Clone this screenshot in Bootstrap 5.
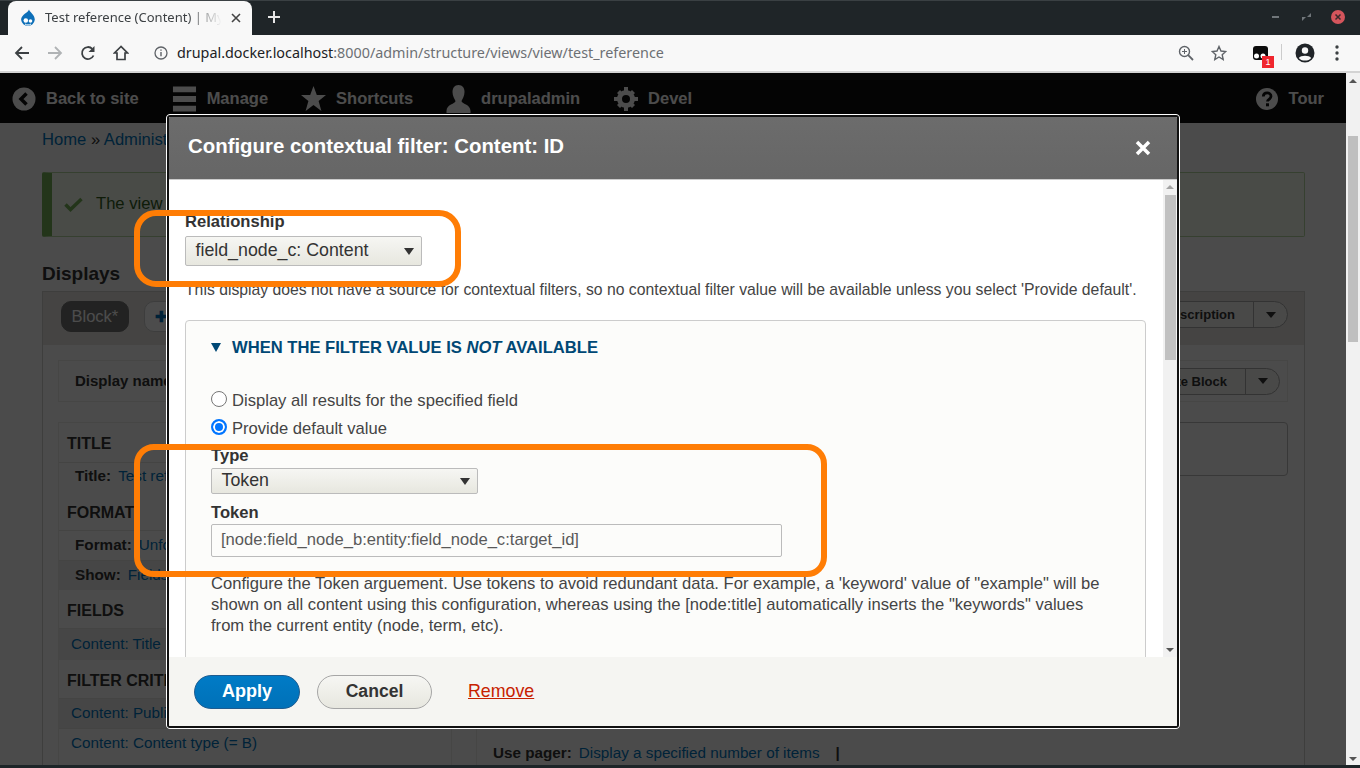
<!doctype html>
<html lang="en">
<head>
<meta charset="utf-8">
<title>Test reference (Content)</title>
<link href="https://cdn.jsdelivr.net/npm/bootstrap@5.3.0/dist/css/bootstrap.min.css" rel="stylesheet">
<style>
html,body{margin:0;height:768px;overflow:hidden;background:#1d2528}
body{font-family:"Liberation Sans",Arial,sans-serif;font-size:16.6px;color:#333}
.tabstrip{height:35px;background:#1f2528;border-top:1px solid #3a4043;padding-left:8px;font-family:"Noto Sans","Open Sans",sans-serif}
.tabitem{width:244px;height:34px;background:#f8f8f8;border-radius:8px 8px 0 0;padding:0 10px 0 12px;font-size:13px;color:#3c4043;white-space:nowrap}
.tabname{width:182px;overflow:hidden;margin-left:9px;-webkit-mask-image:linear-gradient(90deg,#000 78%,transparent 97%)}
.plusmark{margin-left:15px}
.stripy{margin-bottom:11px}
.winctl{margin-left:auto;padding-right:15px;gap:17px}
.addrbar{height:38px;background:#f8f8f8;border-bottom:2px solid #d3d3d3;padding:0 0 2px 14px;position:relative}
.addrbar svg{display:block}
.addr-right>svg,.infoi{margin-top:2px}
.navic{width:33px;height:16px;margin-top:2px}
.infoi{margin-left:9px}
.urltxt{font:14.35px "Noto Sans","Open Sans",sans-serif;color:#6d7074;margin-left:9px;white-space:nowrap}
.urltxt b{font-weight:400;color:#202124}
.addr-right{margin-left:auto;padding-right:21px}
.badge1{position:absolute;left:1262px;top:21px;width:12px;height:12px;background:#f0262e;color:#fff;font:9px/12px "Liberation Sans",sans-serif;text-align:center}
.vw{height:692px;position:relative;overflow:hidden;background:#fcfcfa}
.pagearea{width:1346px;height:692px;position:relative;overflow:hidden}
.dimmer{position:absolute;inset:0;background:rgba(0,0,0,.7)}
.dtool{height:50px;background:#0f0f0f;color:#fff;font-weight:700;font-size:16.5px;padding:1px 22px 0 12px}
.toolitem{gap:10px}
.toolgap{gap:33px}
.crumb{padding:6px 42px 0;height:33px;line-height:22px;white-space:nowrap}
.bglink{color:#0074bd}
.msgbox{margin:16px 41px 0 42px;height:65px;border:1px solid #b5d6a2;border-left:10px solid #77b259;border-radius:2px;background:#f3faef;color:#325e1c;padding-left:12px;gap:13px;white-space:nowrap}
.dsp-title{margin:25px 0 0 42px;font-size:19px;font-weight:700;line-height:24px;height:29px}
.dsp-box{margin:0 41px 0 42px;height:480px;border:1px solid #cfcfcb;border-bottom:0;position:relative}
.dsp-band{height:53px;background:#e6e5e1;padding:9px 16px 0 18px;align-items:flex-start}
.pillx{height:31px;border-radius:10px;padding:0 10px;line-height:29px;border:1px solid #ccc;background:#fff;color:#0074bd;font-weight:700;font-size:15px;white-space:nowrap}
.pillx.on{border-color:#727272;background:#727272;color:#fff;font-weight:400;margin-right:15px;font-size:16.5px;padding:0 9.500px}
.splitb{height:27px;border:1px solid #aaa;border-radius:14px;background:#f3f3f0;font-size:13px;font-weight:700;color:#333;white-space:nowrap}
.splitb .lhs{padding:0 18px;line-height:25px}
.splitb .rhs{width:34px;border-left:1px solid #aaa;height:100%}
.caretdn{width:0;height:0;border:5px solid transparent;border-top:6px solid #333;border-bottom:0}
.sel .caretdn{border-width:7px 5.500px 0}
.sel span{padding-bottom:2px}
.namebar{margin:15px 16px 0 15px;height:42px;border:1px solid #e9e9e6;padding:0 7px 0 16px;font-weight:700;font-size:15px;white-space:nowrap}
.colwrap{margin:20px 16px 0 15px;gap:24px}
.lcol{width:394px;border:1px solid #e9e9e6;border-bottom:0}
.rcol{flex:1;min-width:0}
.bhead{font-weight:700;font-size:16px;padding:4px 0 0 8px;white-space:nowrap}
.bhead.top1{padding-top:2px}
.brow{padding-left:12px;border-top:1px solid #e5e5e2;white-space:nowrap;color:#333;font-size:15.25px}
.brow.tint{background:#ececea}
.brow.ind{padding-left:16px;gap:7px}
.brow.ind.lift{padding-bottom:2px}
.rtop{height:54px;border:1px solid #bbb;border-radius:4px}
.pager{margin-top:266px;padding-left:16px;font-size:15.25px;white-space:nowrap}
.pglink{margin:0 16px 0 7px}
.pgsb{position:absolute;right:0;top:0;width:14px;height:692px;background:#f1f1f1}
.pgthumb{position:absolute;left:2px;top:63px;width:10px;height:206px;background:#bfbfbf}
.arup,.ardn{position:absolute;left:3px;width:0;height:0;border-left:4px solid transparent;border-right:4px solid transparent}
.arup{top:6px;border-bottom:4px solid #555}
.ardn{bottom:4px;border-top:4px solid #555}
.dlg{position:absolute;left:166px;top:41px;width:1014px;height:615px;border:1px solid #fff;border-radius:4px;background:#fff}
.dlg-in{height:100%;border:2px solid #111;border-radius:3px;overflow:hidden;background:#fff;display:flex;flex-direction:column}
.dlg-head{height:63px;flex:none;background:linear-gradient(#6c6c6c,#666);color:#fff;padding:0 26px 0 19px;border-bottom:1px solid #ccc}
.dlg-head h2{font:700 20.4px "Liberation Sans",sans-serif;margin:-3px 0 0}
.dlg-head svg{margin-top:-1px}
.dlg-body{height:477px;flex:none;overflow:hidden;position:relative;background:#fff;padding:31px 0 0 16px;color:#444}
.sb2{position:absolute;top:0;right:0;width:14px;height:477px;background:#f1f1f1}
.sb2 .th2{position:absolute;left:2px;top:15px;width:11px;height:165px;background:#c1c1c1}
.sb2 .arup{left:3px;top:5px;border-bottom-color:#a3a3a3}
.sb2 .ardn{left:3px;bottom:5px}
.lab{font-weight:700;color:#333;line-height:22px;display:block}
.sel{border:1px solid #bbb;border-radius:2px;background:linear-gradient(#f6f6f3,#e7e7df);color:#333;font-size:17.8px;padding:0 7px 0 9.500px;white-space:nowrap}
.fs1{width:237px;height:30px;margin-top:3px}
.fs2{width:267px;height:26px;margin-top:1px}
.hint{margin-top:14px;line-height:20px;font-size:15.75px;white-space:nowrap}
.fldset{width:961px;height:400px;margin-top:20px;border:1px solid #ccc;border-radius:4px;background:#fcfcfa;padding:0 25px}
.lgd{height:65px;padding-bottom:12px;font-weight:700;color:#004875;line-height:20px;white-space:nowrap}
.lgdtri{width:0;height:0;border-left:5px solid transparent;border-right:5px solid transparent;border-top:9px solid #004875;margin:0 11px 0 0}
.rad{height:28px;padding-top:2px;gap:5px;white-space:nowrap}
.radc{width:16px;height:16px;border:1px solid #767676;border-radius:50%;background:#fff;flex:none;margin-top:-5px}
.radc.chk{border:2px solid #0075ff;box-shadow:inset 0 0 0 2px #fff;background:#0075ff}
.tinp{width:571px;height:33px;margin-top:0;border:1px solid #bbb;border-radius:2px;background:#fcfcfa;padding:0 9px;color:#595959;white-space:nowrap;line-height:29px}
.dsc{margin-top:16px;line-height:21px;width:905px}
.dlg-foot{flex:1;background:#f5f5f2;padding:0 25px;gap:17px}
.btnapply{width:106px;height:34px;border-radius:20px;background:linear-gradient(#007bc6,#0071b8);border:1px solid #1e5c90;color:#fff;font-weight:700;font-size:18px;padding:0}
.btncancel{width:115px;height:34px;border-radius:20px;background:linear-gradient(#f6f6f3,#e7e7df);border:1px solid #a6a6a6;color:#333;font-weight:700;font-size:17.6px;padding:0}
.rmv{color:#c72100;margin-left:19px;font-size:17.8px}
.anno{position:absolute;border:6px solid #ff7d05;pointer-events:none}
.anno1{left:134px;top:137px;width:327px;height:77px;border-radius:22px}
.anno2{left:134px;top:371px;width:693px;height:133px;border-radius:20px}
.gearsp{margin-left:1px}
</style>
</head>
<body>
<div class="tabstrip d-flex align-items-end">
  <div class="tabitem d-flex align-items-center">
    <svg width="16" height="18" viewBox="0 0 16 18"><path d="M9 .5c.6 2.600 5.800 5 5.800 10.300A6.900 6.900 0 0 1 1.100 10.800C1.100 5.500 8.400 3.600 9 .5z" fill="#0d6fb8"/><circle cx="5.800" cy="11.500" r="2.300" fill="#fff"/><circle cx="10.500" cy="12" r="1.800" fill="#fff"/><path d="M5 15c2 1.300 4 1.300 6 0" stroke="#fff" fill="none"/></svg>
    <span class="tabname">Test reference (Content) | My Drupal</span>
    <svg class="ms-1" width="10" height="10" viewBox="0 0 10 10"><path d="M1 1l8 8M9 1L1 9" stroke="#444" stroke-width="1.600"/></svg>
  </div>
  <svg class="plusmark stripy" width="14" height="14" viewBox="0 0 14 14"><path d="M7 1v12M1 7h12" stroke="#e6e6e6" stroke-width="2"/></svg>
  <div class="winctl stripy d-flex align-items-center">
    <svg width="14" height="14" viewBox="0 0 14 14"><path d="M3 7h7" stroke="#70767a" stroke-width="2"/></svg>
    <svg width="14" height="14" viewBox="0 0 14 14"><path d="M7 7l4-4v4zM6 7l-4 4V7z" fill="#70767a"/></svg>
    <svg width="14" height="14" viewBox="0 0 14 14"><circle cx="7" cy="7" r="7" fill="#d4555c"/><path d="M4.500 4.500l5 5M9.500 4.500l-5 5" stroke="#3a2a2c" stroke-width="1.500"/></svg>
  </div>
</div>
<div class="addrbar d-flex align-items-center">
  <div class="navic"><svg width="16" height="16" viewBox="0 0 16 16"><path d="M15 8H2M8 2L2 8l6 6" fill="none" stroke="#3c4043" stroke-width="1.800"/></svg></div>
  <div class="navic"><svg width="16" height="16" viewBox="0 0 16 16"><path d="M1 8h13M8 2l6 6-6 6" fill="none" stroke="#b0b3b5" stroke-width="1.800"/></svg></div>
  <div class="navic"><svg width="16" height="16" viewBox="0 0 16 16"><path d="M13.500 10.500A6 6 0 1 1 12.300 3.800" fill="none" stroke="#3c4043" stroke-width="1.800"/><path d="M14.500 1v6h-6z" fill="#3c4043"/></svg></div>
  <div class="navic" style="width:32px"><svg width="16" height="16" viewBox="0 0 16 16"><path d="M8 1.500L1.500 8H4v6.500h8V8h2.500z" fill="none" stroke="#3c4043" stroke-width="1.700"/></svg></div>
  <svg class="infoi" width="14" height="14" viewBox="0 0 14 14"><circle cx="7" cy="7" r="6" fill="none" stroke="#5f6368" stroke-width="1.300"/><path d="M7 6v4.300M7 3.500v1.300" stroke="#5f6368" stroke-width="1.400"/></svg>
  <div class="urltxt"><b>drupal.docker.localhost</b>:8000/admin/structure/views/view/test_reference</div>
  <div class="addr-right d-flex align-items-center">
    <svg width="16" height="16" viewBox="0 0 16 16"><circle cx="6.500" cy="6.500" r="5" fill="none" stroke="#5f6368" stroke-width="1.400"/><path d="M10.200 10.200L15 15" stroke="#5f6368" stroke-width="1.800"/><path d="M4 6.500h5M6.500 4v5" stroke="#5f6368"/></svg>
    <svg style="margin-left:17px" width="16" height="16" viewBox="0 0 16 16"><path d="M8 1.500l2 4.500 4.800.5-3.600 3.200 1 4.800L8 12l-4.200 2.500 1-4.800L1.200 6.500 6 6z" fill="none" stroke="#5f6368" stroke-width="1.400"/></svg>
    <svg style="margin-left:25px" width="16" height="16" viewBox="0 0 16 16"><rect x="1" y="1" width="15" height="14" rx="3" fill="#0c0c0c"/><circle cx="4.500" cy="11" r="2.500" fill="#fff"/><circle cx="11" cy="11" r="2.500" fill="#fff"/></svg>
    <span class="border-start" style="height:16px;margin-left:13px;border-color:#ccc!important"></span>
    <svg style="margin-left:13px" width="20" height="20" viewBox="0 0 20 20"><circle cx="10" cy="10" r="9.500" fill="#202428"/><circle cx="10" cy="7.500" r="3.200" fill="#f8f8f8"/><path d="M3.800 15c2-3 10.400-3 12.400 0-2 3.400-10.400 3.400-12.400 0z" fill="#f8f8f8"/></svg>
    <svg style="margin-left:20px" width="4" height="16" viewBox="0 0 4 16"><circle cx="2" cy="2" r="1.700" fill="#3c4043"/><circle cx="2" cy="8" r="1.700" fill="#3c4043"/><circle cx="2" cy="14" r="1.700" fill="#3c4043"/></svg>
  </div>
  <span class="badge1">1</span>
</div>
<div class="vw">
  <div class="pagearea">
    <div class="dtool d-flex align-items-center justify-content-between">
      <div class="d-flex toolgap">
        <div class="toolitem d-flex align-items-center"><svg width="24" height="24" viewBox="0 0 24 24"><circle cx="12" cy="12" r="11.500" fill="#fff"/><path d="M14.500 6.500L9 12l5.500 5.500" fill="none" stroke="#0f0f0f" stroke-width="3.500"/></svg><span>Back to site</span></div>
        <div class="toolitem d-flex align-items-center"><svg width="25" height="30" viewBox="0 0 26 30"><path d="M1 2h24v6H1zM1 12h24v6H1zM1 22h24v6H1z" fill="#fff"/></svg><span>Manage</span></div>
        <div class="toolitem d-flex align-items-center"><svg width="25" height="26" viewBox="0 0 25 26"><path d="M12.500 0l3.300 9H25l-7.400 6 2.800 10-7.900-6-7.900 6 2.800-10L0 9h9.200z" fill="#fff"/></svg><span>Shortcuts</span></div>
        <div class="toolitem d-flex align-items-center"><svg width="25" height="28" viewBox="0 0 24 28"><path d="M12 0c4 0 6 3 6 7 0 4-2 7-3 9 0 3 9 3 9 10v2H0v-2c0-7 9-7 9-10-1-2-3-5-3-9 0-4 2-7 6-7z" fill="#fff"/></svg><span>drupaladmin</span></div>
        <div class="toolitem gearsp d-flex align-items-center"><svg width="24" height="26" viewBox="0 0 24 24"><circle cx="12" cy="12" r="6.500" fill="none" stroke="#fff" stroke-width="5"/><path d="M10 0h4v5h-4zM10 19h4v5h-4zM0 10h5v4H0zM19 10h5v4h-5zM3 6l3-3 3.500 3.500-3 3zM21 18l-3 3-3.500-3.500 3-3zM3 18l3 3 3.500-3.500-3-3zM21 6l-3-3-3.500 3.500 3 3z" fill="#fff"/></svg><span>Devel</span></div>
      </div>
      <div class="d-flex align-items-center" style="gap:11px"><svg width="22" height="22" viewBox="0 0 22 22"><circle cx="11" cy="11" r="11" fill="#fff"/><path d="M7.300 8.500C7.500 3.800 15 3.800 15 8.300c0 3-3.500 3-3.500 5.200" fill="none" stroke="#0f0f0f" stroke-width="2.800"/><rect x="10" y="15.300" width="3" height="3" fill="#0f0f0f"/></svg><span>Tour</span></div>
    </div>
    <div class="crumb"><span class="bglink">Home</span> » <span class="bglink">Administ</span></div>
    <div class="msgbox d-flex align-items-center"><svg width="19" height="15" viewBox="0 0 19 15"><path d="M1.500 7.500l5 5L17.500 2" fill="none" stroke="#77b259" stroke-width="3.500"/></svg><span>The view</span></div>
    <div class="dsp-title">Displays</div>
    <div class="dsp-box">
      <div class="dsp-band d-flex">
        <span class="pillx on">Block*</span>
        <span class="pillx">✚ Add</span>
        <div class="ms-auto splitb d-flex align-items-center"><span class="lhs">Edit view name/description</span><span class="rhs d-flex align-items-center justify-content-center"><i class="caretdn"></i></span></div>
      </div>
      <div class="namebar d-flex align-items-center justify-content-between"><span>Display name:</span><div class="splitb d-flex align-items-center"><span class="lhs">Duplicate Block</span><span class="rhs d-flex align-items-center justify-content-center"><i class="caretdn"></i></span></div></div>
      <div class="colwrap d-flex">
        <div class="lcol">
          <div class="bhead top1 d-flex align-items-center" style="height:39px">TITLE</div>
          <div class="brow ind lift d-flex align-items-center" style="height:30px"><b>Title:</b><span class="bglink">Test reference</span></div>
          <div class="bhead d-flex align-items-center" style="height:38px">FORMAT</div>
          <div class="brow ind d-flex align-items-center" style="height:30px"><b>Format:</b><span class="bglink">Unformatted</span></div>
          <div class="brow ind tint d-flex align-items-center" style="height:30px"><b>Show:</b><span class="bglink">Fields</span></div>
          <div class="bhead d-flex align-items-center" style="height:38px">FIELDS</div>
          <div class="brow tint d-flex align-items-center" style="height:32px"><span class="bglink">Content: Title</span></div>
          <div class="bhead d-flex align-items-center" style="height:38px">FILTER CRITERIA</div>
          <div class="brow tint d-flex align-items-center" style="height:30px"><span class="bglink">Content: Published (= Yes)</span></div>
          <div class="brow d-flex align-items-center" style="height:30px"><span class="bglink">Content: Content type (= B)</span></div>
        </div>
        <div class="rcol border-start" style="border-color:#e9e9e6!important">
          <div class="rtop"></div>
          <div class="pager"><b>Use pager:</b><span class="bglink pglink">Display a specified number of items</span><b>|</b></div>
        </div>
      </div>
    </div>
    <div class="dimmer"></div>
    <div class="dlg">
      <div class="dlg-in">
        <div class="dlg-head d-flex align-items-center justify-content-between">
          <h2>Configure contextual filter: Content: ID</h2>
          <svg width="16" height="16" viewBox="0 0 16 16"><path d="M2 2l12 12M14 2L2 14" stroke="#fff" stroke-width="3.500"/></svg>
        </div>
        <div class="dlg-body">
          <span class="lab">Relationship</span>
          <div class="sel fs1 d-flex align-items-center justify-content-between"><span>field_node_c: Content</span><i class="caretdn"></i></div>
          <div class="hint">This display does not have a source for contextual filters, so no contextual filter value will be available unless you select 'Provide default'.</div>
          <div class="fldset">
            <div class="lgd d-flex align-items-center"><i class="lgdtri"></i><span>WHEN THE FILTER VALUE IS <em>NOT</em> AVAILABLE</span></div>
            <div class="rad d-flex align-items-center"><span class="radc"></span><span>Display all results for the specified field</span></div>
            <div class="rad d-flex align-items-center"><span class="radc chk"></span><span>Provide default value</span></div>
            <span class="lab" style="margin-top:3px">Type</span>
            <div class="sel fs2 d-flex align-items-center justify-content-between"><span>Token</span><i class="caretdn"></i></div>
            <span class="lab" style="margin-top:8px">Token</span>
            <div class="tinp">[node:field_node_b:entity:field_node_c:target_id]</div>
            <div class="dsc">Configure the Token arguement. Use tokens to avoid redundant data. For example, a 'keyword' value of "example" will be shown on all content using this configuration, whereas using the [node:title] automatically inserts the "keywords" values from the current entity (node, term, etc).</div>
          </div>
          <div class="sb2"><span class="arup"></span><span class="th2"></span><span class="ardn"></span></div>
        </div>
        <div class="dlg-foot d-flex align-items-center">
          <button type="button" class="btn btnapply">Apply</button>
          <button type="button" class="btn btncancel">Cancel</button>
          <a href="#" class="rmv">Remove</a>
        </div>
      </div>
    </div>
    <div class="anno anno1"></div>
    <div class="anno anno2"></div>
  </div>
  <div class="pgsb"><span class="arup"></span><span class="pgthumb"></span><span class="ardn"></span></div>
</div>
</body>
</html>
